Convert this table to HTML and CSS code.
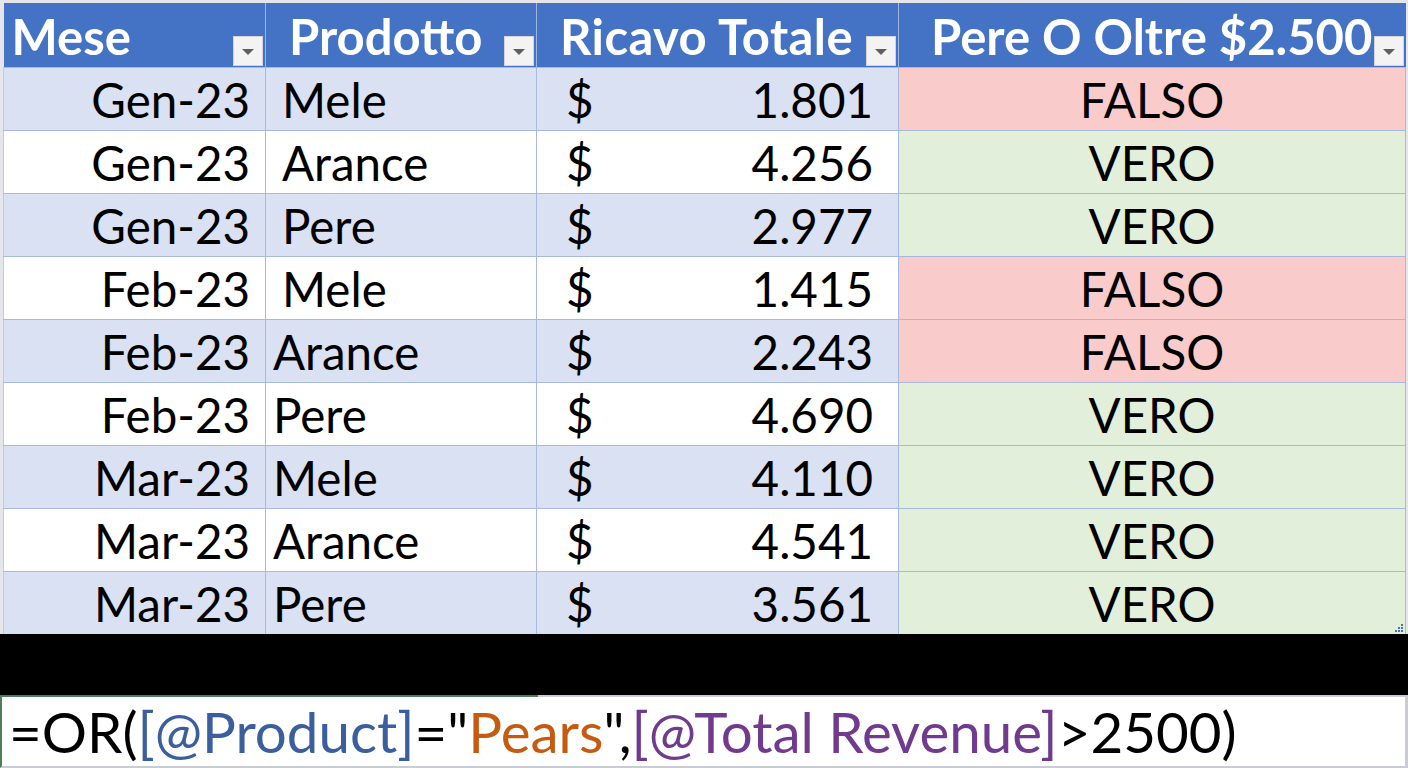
FILE: index.html
```html
<!DOCTYPE html>
<html lang="it">
<head>
<meta charset="utf-8">
<title>Tabella</title>
<link rel="stylesheet" href="styles.css">
</head>
<body>
<div class="sheet">
  <table class="grid">
    <colgroup>
      <col class="c1"><col class="c2"><col class="c3"><col class="c4">
    </colgroup>
    <thead>
      <tr>
        <th><div class="hcell h1"><span>Mese</span><span class="filter"><i></i></span></div></th>
        <th><div class="hcell h2"><span>Prodotto</span><span class="filter"><i></i></span></div></th>
        <th><div class="hcell h3"><span>Ricavo Totale</span><span class="filter"><i></i></span></div></th>
        <th><div class="hcell h4"><span>Pere O Oltre $2.500</span><span class="filter"><i></i></span></div></th>
      </tr>
    </thead>
    <tbody>
      <tr class="band"><td class="month">Gen-23</td><td class="prod indent">Mele</td><td class="rev"><div class="money"><span>$</span><span>1.801</span></div></td><td class="res no">FALSO</td></tr>
      <tr><td class="month">Gen-23</td><td class="prod indent">Arance</td><td class="rev"><div class="money"><span>$</span><span>4.256</span></div></td><td class="res yes">VERO</td></tr>
      <tr class="band"><td class="month">Gen-23</td><td class="prod indent">Pere</td><td class="rev"><div class="money"><span>$</span><span>2.977</span></div></td><td class="res yes">VERO</td></tr>
      <tr><td class="month">Feb-23</td><td class="prod indent">Mele</td><td class="rev"><div class="money"><span>$</span><span>1.415</span></div></td><td class="res no">FALSO</td></tr>
      <tr class="band"><td class="month">Feb-23</td><td class="prod">Arance</td><td class="rev"><div class="money"><span>$</span><span>2.243</span></div></td><td class="res no">FALSO</td></tr>
      <tr><td class="month">Feb-23</td><td class="prod">Pere</td><td class="rev"><div class="money"><span>$</span><span>4.690</span></div></td><td class="res yes">VERO</td></tr>
      <tr class="band"><td class="month">Mar-23</td><td class="prod">Mele</td><td class="rev"><div class="money"><span>$</span><span>4.110</span></div></td><td class="res yes">VERO</td></tr>
      <tr><td class="month">Mar-23</td><td class="prod">Arance</td><td class="rev"><div class="money"><span>$</span><span>4.541</span></div></td><td class="res yes">VERO</td></tr>
      <tr class="band"><td class="month">Mar-23</td><td class="prod">Pere</td><td class="rev"><div class="money"><span>$</span><span>3.561</span></div></td><td class="res yes last">VERO<svg class="handle" width="8" height="8" viewBox="0 0 8 8"><rect x="6" y="0" width="2" height="2" fill="#4a6db5"/><rect x="3" y="3" width="2" height="2" fill="#4a6db5"/><rect x="6" y="3" width="2" height="2" fill="#4a6db5"/><rect x="0" y="6" width="2" height="2" fill="#4a6db5"/><rect x="3" y="6" width="2" height="2" fill="#4a6db5"/><rect x="6" y="6" width="2" height="2" fill="#4a6db5"/></svg></td></tr>
    </tbody>
  </table>
</div>
<div class="blackband"></div>
<div class="formula"><span class="k">=OR(</span><span class="ref1">[@Product]</span><span class="k">="</span><span class="str">Pears</span><span class="k">",</span><span class="ref2">[@Total Revenue]</span><span class="k">&gt;2500)</span></div>
</body>
</html>
```
FILE: styles.css
```css
* { box-sizing: border-box; }
html, body { margin: 0; padding: 0; }
body {
  background: #e4e6ec;
  font-family: "Lato", "Liberation Sans", sans-serif;
  width: 1408px;
  height: 768px;
  overflow: hidden;
}
.sheet {
  padding: 3px 3px 0 3px;
  height: 634px;
}
.grid {
  border-collapse: collapse;
  table-layout: fixed;
  width: 1402px;
}
.c1 { width: 262px; }
.c2 { width: 271px; }
.c3 { width: 362px; }
.c4 { width: 507px; }

.grid th {
  background: #4472c4;
  color: #fff;
  height: 64px;
  padding: 0;
  border-left: 1px solid #9db3e0;
  font-weight: 700;
  font-size: 49px;
  text-align: left;
}
.grid th:first-child { border-left: none; }
.hcell {
  display: flex;
  align-items: center;
  height: 64px;
}
.hcell > span:first-child { line-height: 1; margin-top: 3px; }
.h1 { padding-left: 8px; }
.h2 { padding-left: 23px; }
.h3 { padding-left: 23px; letter-spacing: 0.4px; }
.h4 { padding-left: 32px; }
.filter {
  margin-left: auto;
  align-self: flex-end;
  margin-right: 2px;
  margin-bottom: 1px;
  width: 30px;
  height: 30px;
  background: #f3f3f3;
  border: 1px solid #d4d4d4;
  display: flex;
  align-items: center;
  justify-content: center;
}
.filter i {
  display: block;
  width: 0; height: 0;
  border-left: 6px solid transparent;
  border-right: 6px solid transparent;
  border-top: 6px solid #5f5f5f;
  margin-top: 2px;
}

.grid td {
  height: 63px;
  padding: 2px 0 0 0;
  font-size: 47.5px;
  color: #000;
  border: 1px solid #a7b9df;
  line-height: 1;
  background: #fff;
}
.grid tr.band td { background: #d9e1f2; }
.grid td:first-child { border-left: 1px solid #c4cad6; }
.grid td.month { text-align: right; padding-right: 15px; }
.grid td.prod { padding-left: 7px; }
.grid td.prod.indent { padding-left: 16px; }
.money {
  display: flex;
  justify-content: space-between;
  padding: 0 25px 0 29px;
}
.grid td.res { text-align: center; }
.grid tr td.res.no { background: #f9cbcb; }
.grid tr td.res.yes { background: #e2efda; }
.grid td.res.last { position: relative; }
.handle { position: absolute; right: 2px; bottom: 2px; }

.blackband {
  height: 61px;
  background: #000;
}
.formula {
  height: 73px;
  background: #fff;
  border: 2px solid #c9ccd2;
  border-left-color: #4f7d5e;
  border-right: 3px solid #c9ccd2;
  padding-left: 7px;
  display: flex;
  align-items: center;
  font-size: 56.5px;
  line-height: 1;
  white-space: pre;
  position: relative;
}
.formula::before {
  content: "";
  position: absolute;
  left: -2px; top: -2px;
  width: 538px;
  height: 2px;
  background: #4f7d5e;
}
.k { color: #000; }
.ref1 { color: #3b5f9e; }
.str { color: #c55a11; }
.ref2 { color: #703b8e; }
```
